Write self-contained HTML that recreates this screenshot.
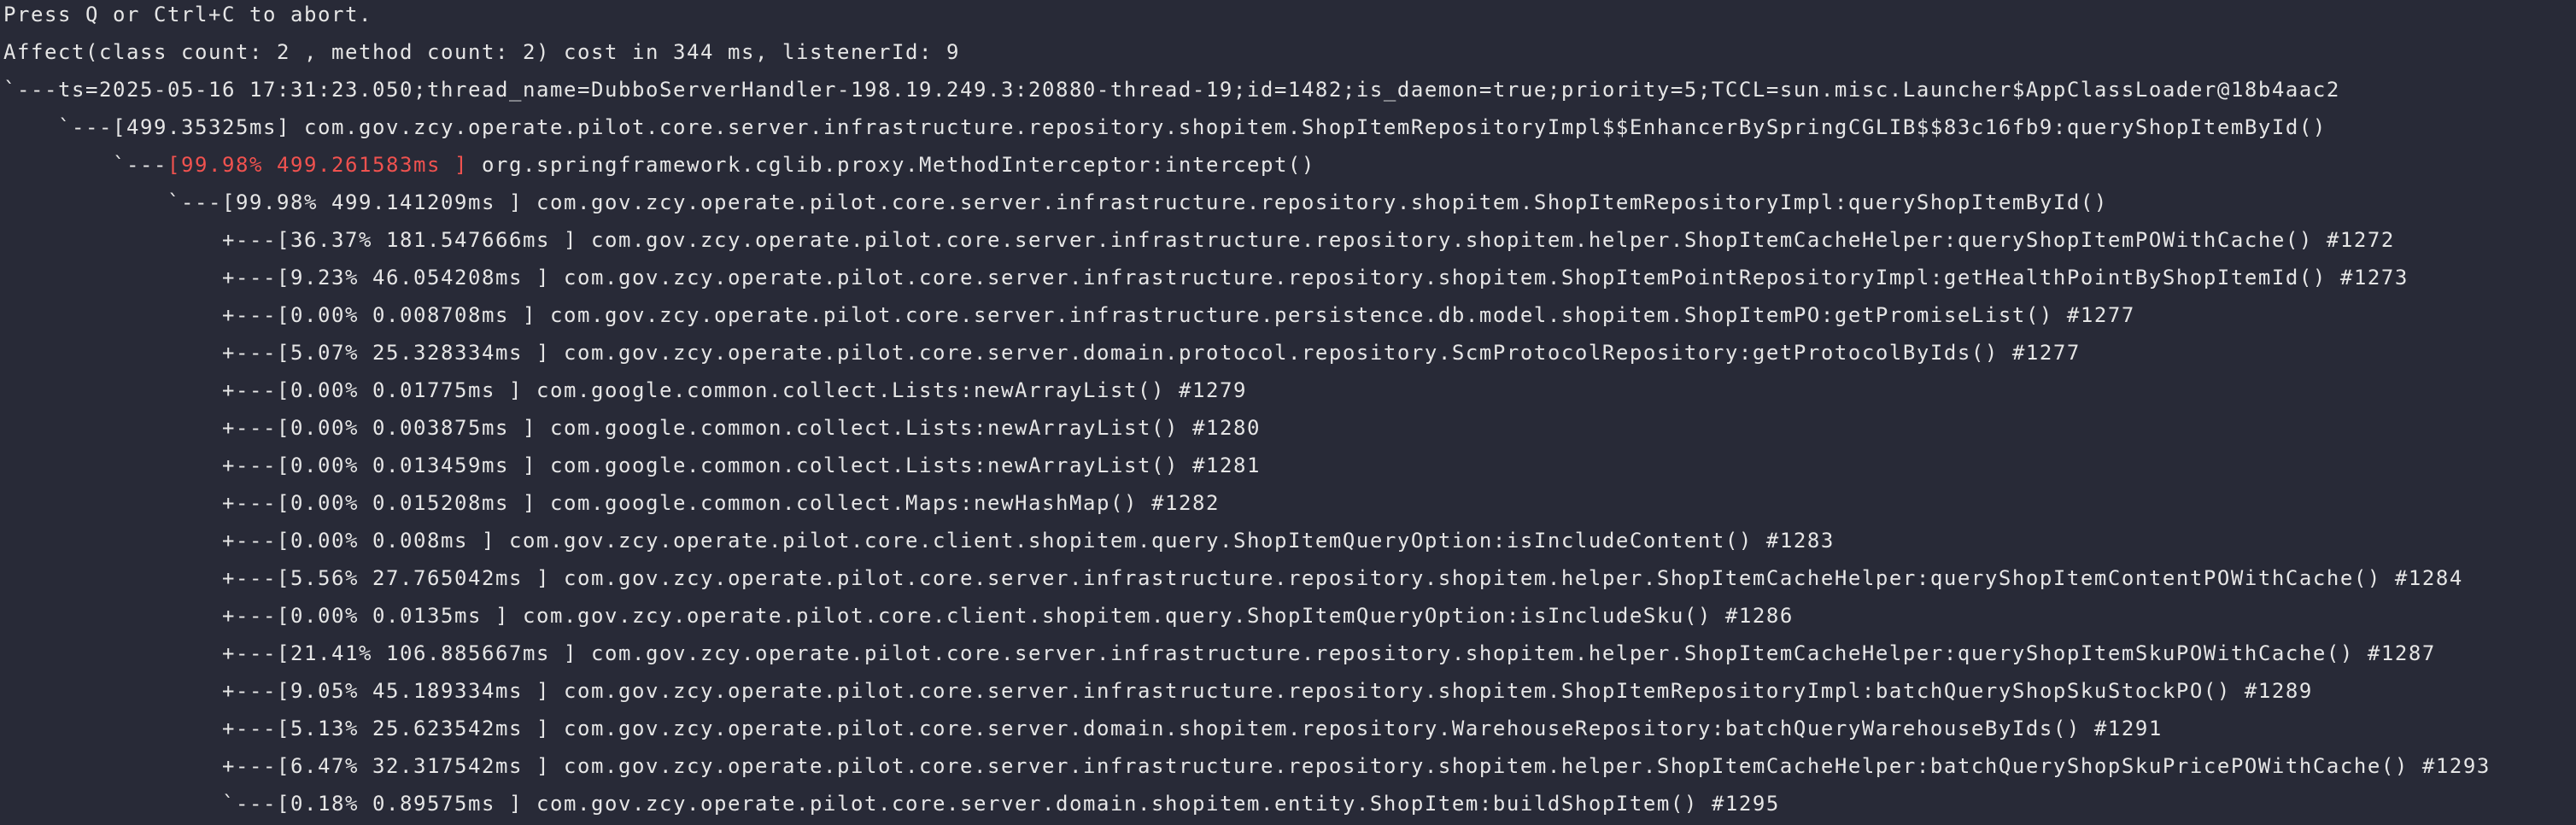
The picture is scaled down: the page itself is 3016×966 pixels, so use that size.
<!DOCTYPE html>
<html><head><meta charset="utf-8"><style>
html,body{margin:0;padding:0;background:#282a37;width:3016px;height:966px;overflow:hidden}
.t{position:absolute;left:0;top:0;width:3016px}
.l{position:absolute;height:44px;line-height:44px;white-space:pre;color:#e6e6e6;font-family:"DejaVu Sans Mono","Liberation Mono",monospace;font-size:24px;letter-spacing:1.55px}
.r{color:#f0524f}
</style></head><body><div class="t">
<div class="l" style="top:-5px;left:4px">Press Q or Ctrl+C to abort.</div>
<div class="l" style="top:39px;left:4px">Affect(class count: 2 , method count: 2) cost in 344 ms, listenerId: 9</div>
<div class="l" style="top:83px;left:4px">`---ts=2025-05-16 17:31:23.050;thread_name=DubboServerHandler-198.19.249.3:20880-thread-19;id=1482;is_daemon=true;priority=5;TCCL=sun.misc.Launcher$AppClassLoader@18b4aac2</div>
<div class="l" style="top:127px;left:68px">`---[499.35325ms] com.gov.zcy.operate.pilot.core.server.infrastructure.repository.shopitem.ShopItemRepositoryImpl$$EnhancerBySpringCGLIB$$83c16fb9:queryShopItemById()</div>
<div class="l" style="top:171px;left:132px">`---<span class="r">[99.98% 499.261583ms ]</span> org.springframework.cglib.proxy.MethodInterceptor:intercept()</div>
<div class="l" style="top:215px;left:196px">`---[99.98% 499.141209ms ] com.gov.zcy.operate.pilot.core.server.infrastructure.repository.shopitem.ShopItemRepositoryImpl:queryShopItemById()</div>
<div class="l" style="top:259px;left:260px">+---[36.37% 181.547666ms ] com.gov.zcy.operate.pilot.core.server.infrastructure.repository.shopitem.helper.ShopItemCacheHelper:queryShopItemPOWithCache() #1272</div>
<div class="l" style="top:303px;left:260px">+---[9.23% 46.054208ms ] com.gov.zcy.operate.pilot.core.server.infrastructure.repository.shopitem.ShopItemPointRepositoryImpl:getHealthPointByShopItemId() #1273</div>
<div class="l" style="top:347px;left:260px">+---[0.00% 0.008708ms ] com.gov.zcy.operate.pilot.core.server.infrastructure.persistence.db.model.shopitem.ShopItemPO:getPromiseList() #1277</div>
<div class="l" style="top:391px;left:260px">+---[5.07% 25.328334ms ] com.gov.zcy.operate.pilot.core.server.domain.protocol.repository.ScmProtocolRepository:getProtocolByIds() #1277</div>
<div class="l" style="top:435px;left:260px">+---[0.00% 0.01775ms ] com.google.common.collect.Lists:newArrayList() #1279</div>
<div class="l" style="top:479px;left:260px">+---[0.00% 0.003875ms ] com.google.common.collect.Lists:newArrayList() #1280</div>
<div class="l" style="top:523px;left:260px">+---[0.00% 0.013459ms ] com.google.common.collect.Lists:newArrayList() #1281</div>
<div class="l" style="top:567px;left:260px">+---[0.00% 0.015208ms ] com.google.common.collect.Maps:newHashMap() #1282</div>
<div class="l" style="top:611px;left:260px">+---[0.00% 0.008ms ] com.gov.zcy.operate.pilot.core.client.shopitem.query.ShopItemQueryOption:isIncludeContent() #1283</div>
<div class="l" style="top:655px;left:260px">+---[5.56% 27.765042ms ] com.gov.zcy.operate.pilot.core.server.infrastructure.repository.shopitem.helper.ShopItemCacheHelper:queryShopItemContentPOWithCache() #1284</div>
<div class="l" style="top:699px;left:260px">+---[0.00% 0.0135ms ] com.gov.zcy.operate.pilot.core.client.shopitem.query.ShopItemQueryOption:isIncludeSku() #1286</div>
<div class="l" style="top:743px;left:260px">+---[21.41% 106.885667ms ] com.gov.zcy.operate.pilot.core.server.infrastructure.repository.shopitem.helper.ShopItemCacheHelper:queryShopItemSkuPOWithCache() #1287</div>
<div class="l" style="top:787px;left:260px">+---[9.05% 45.189334ms ] com.gov.zcy.operate.pilot.core.server.infrastructure.repository.shopitem.ShopItemRepositoryImpl:batchQueryShopSkuStockPO() #1289</div>
<div class="l" style="top:831px;left:260px">+---[5.13% 25.623542ms ] com.gov.zcy.operate.pilot.core.server.domain.shopitem.repository.WarehouseRepository:batchQueryWarehouseByIds() #1291</div>
<div class="l" style="top:875px;left:260px">+---[6.47% 32.317542ms ] com.gov.zcy.operate.pilot.core.server.infrastructure.repository.shopitem.helper.ShopItemCacheHelper:batchQueryShopSkuPricePOWithCache() #1293</div>
<div class="l" style="top:919px;left:260px">`---[0.18% 0.89575ms ] com.gov.zcy.operate.pilot.core.server.domain.shopitem.entity.ShopItem:buildShopItem() #1295</div>
</div></body></html>
